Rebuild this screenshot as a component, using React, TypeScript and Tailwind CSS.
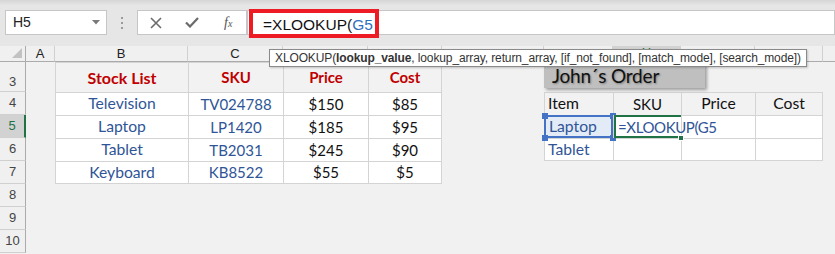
import React from "react";

const LETTERS = ["A", "B", "C", "D", "E", "F", "G", "H", "I", "J", ""];

const cellFont = { fontFamily: "Lato, 'Open Sans', sans-serif" };
const uiFont = { fontFamily: "'Liberation Sans', Arial, sans-serif" };

function RowHeader({ n, active, tall }: { n: number; active?: boolean; tall?: boolean }) {
  return (
    <div
      className={`flex justify-center ${tall ? "items-end pb-[3px] leading-none" : "items-center"} border-b border-b-[#d0d0d0] ${
        active ? "bg-[#d2d2d2] border-r-2 border-r-[#217346] text-[#217346]" : "bg-[#f0f0f0] border-r border-r-[#ababab] text-[#444]"
      } text-[13px]`}
      style={uiFont}
    >
      {n}
    </div>
  );
}

function Empty() {
  return <div />;
}

type CellProps = {
  children?: React.ReactNode;
  className?: string;
};

function TCell({ children, className = "" }: CellProps) {
  return (
    <div className={`flex items-center border-t border-l border-[#d4d4d4] whitespace-nowrap ${className}`} style={cellFont}>
      {children}
    </div>
  );
}

export default function App() {
  const stock = [
    ["Television", "TV024788", "$150", "$85"],
    ["Laptop", "LP1420", "$185", "$95"],
    ["Tablet", "TB2031", "$245", "$90"],
    ["Keyboard", "KB8522", "$55", "$5"],
  ];

  const rows: React.ReactNode[] = [];

  rows.push(
    <React.Fragment key="r3">
      <RowHeader n={3} tall />
      <Empty />
      <TCell className="justify-center font-bold text-[16px] text-[#c00000] bg-[#f2f2f2]">Stock List</TCell>
      <TCell className="justify-center font-bold text-[15px] text-[#c00000] bg-[#f2f2f2]">SKU</TCell>
      <TCell className="justify-center font-bold text-[15px] text-[#c00000] bg-[#f2f2f2]">Price</TCell>
      <TCell className="justify-center font-bold text-[15px] text-[#c00000] bg-[#f2f2f2] border-r">Cost</TCell>
      <Empty />
      <Empty />
      <Empty />
      <Empty />
      <Empty />
      <Empty />
    </React.Fragment>
  );

  stock.forEach((r, ri) => {
    const n = 4 + ri;
    const last = ri === 3 ? "border-b" : "";
    rows.push(
      <React.Fragment key={"r" + n}>
        <RowHeader n={n} active={n === 5} />
        <Empty />
        <TCell className={`justify-center bg-white text-[15.7px] text-[#2f5597] ${last}`}>{r[0]}</TCell>
        <TCell className={`justify-center bg-white text-[15px] text-[#2f5597] ${last}`}>{r[1]}</TCell>
        <TCell className={`justify-center bg-white text-[15px] text-[#111] ${last}`}>{r[2]}</TCell>
        <TCell className={`justify-center bg-white text-[15px] text-[#111] border-r ${last}`}>{r[3]}</TCell>
        <Empty />
        {n === 4 && (
          <>
            <TCell className="justify-start pl-[3px] bg-[#f2f2f2] text-[15.7px] text-[#111]">Item</TCell>
            <TCell className="justify-center bg-[#f2f2f2] text-[15px] text-[#111]">SKU</TCell>
            <TCell className="justify-center bg-[#f2f2f2] text-[15.7px] text-[#111]">Price</TCell>
            <TCell className="justify-center bg-[#f2f2f2] text-[15.7px] text-[#111] border-r">Cost</TCell>
          </>
        )}
        {n === 5 && (
          <>
            <div className="relative border-t border-l border-[#d4d4d4] bg-[#e3ebf6]">
              <div className="absolute -top-px -left-px right-0 bottom-0 border-2 border-[#4472c4]" />
              <span className="absolute -top-[3px] -left-[3px] w-[6px] h-[6px] bg-[#4472c4]" />
              <span className="absolute -top-[3px] -right-[3px] w-[6px] h-[6px] bg-[#4472c4]" />
              <span className="absolute -bottom-[3px] -left-[3px] w-[6px] h-[6px] bg-[#4472c4]" />
              <span className="absolute -bottom-[3px] -right-[3px] w-[6px] h-[6px] bg-[#4472c4]" />
              <div className="relative flex items-center h-full pl-[4px] text-[15.7px] text-[#2f5597]" style={cellFont}>
                Laptop
              </div>
            </div>
            <div className="relative border-t border-l border-[#d4d4d4] bg-white z-10">
              <div className="absolute -top-px left-0 right-0 bottom-0 border-t-2 border-b-2 border-l-2 border-[#217346]" />
              <span className="absolute -bottom-[3px] -right-[3px] w-[6px] h-[6px] bg-[#217346] border border-white" />
              <div
                className="relative flex items-center h-full pl-[4px] text-[15px] tracking-[-0.4px] text-[#2f5597] whitespace-nowrap"
                style={cellFont}
              >
                =XLOOKUP(G5
              </div>
            </div>
            <TCell className="bg-white" />
            <TCell className="bg-white border-r" />
          </>
        )}
        {n === 6 && (
          <>
            <TCell className="justify-start pl-[3px] bg-white text-[15.7px] text-[#2f5597] border-b">Tablet</TCell>
            <TCell className="bg-white border-b" />
            <TCell className="bg-white border-b" />
            <TCell className="bg-white border-r border-b" />
          </>
        )}
        {n === 7 && (
          <>
            <Empty />
            <Empty />
            <Empty />
            <Empty />
          </>
        )}
        <Empty />
      </React.Fragment>
    );
  });

  [8, 9, 10].forEach((n) => {
    rows.push(
      <React.Fragment key={"r" + n}>
        <RowHeader n={n} />
        {Array.from({ length: 11 }).map((_, i) => (
          <Empty key={i} />
        ))}
      </React.Fragment>
    );
  });

  return (
    <div className="w-[835px] h-[254px] overflow-hidden bg-[#f1f1f1] relative">
      {/* Toolbar */}
      <div
        className="h-[46px] bg-gradient-to-b from-[#d6d6d6] via-[#e6e6e6] via-[12%] to-[#e6e6e6] flex items-start pt-[10px]"
        style={uiFont}
      >
        <div className="ml-[5px] w-[102px] h-[25px] bg-white border border-[#c6c6c6] flex items-center justify-between pl-[7px] pr-[6px] text-[14px] text-[#222]">
          <span>H5</span>
          <svg width="8" height="5" viewBox="0 0 8 5">
            <path d="M0 0 L8 0 L4 4.5 Z" fill="#7a7a7a" />
          </svg>
        </div>
        <div className="w-[30px] h-[25px] flex flex-col items-center justify-center gap-[3px]">
          <span className="w-[2px] h-[2px] bg-[#9a9a9a]" />
          <span className="w-[2px] h-[2px] bg-[#9a9a9a]" />
          <span className="w-[2px] h-[2px] bg-[#9a9a9a]" />
        </div>
        <div className="w-[110px] h-[25px] bg-white border border-[#c6c6c6] flex items-center">
          <div className="w-[37px] flex justify-center">
            <svg width="12" height="12" viewBox="0 0 12 12">
              <path d="M1 1 L11 11 M11 1 L1 11" stroke="#6b6b6b" strokeWidth="1.6" />
            </svg>
          </div>
          <div className="w-[36px] flex justify-center">
            <svg width="14" height="11" viewBox="0 0 14 11">
              <path d="M1 5.5 L5 9.5 L13 1" stroke="#6b6b6b" strokeWidth="2.2" fill="none" />
            </svg>
          </div>
          <div className="w-[36px] flex justify-center">
            <span className="text-[14px] italic text-[#555]" style={{ fontFamily: "'Liberation Serif', serif" }}>
              f<span className="text-[10px]">x</span>
            </span>
          </div>
        </div>
        <div className="flex-1 h-[25px] bg-white border border-[#c6c6c6] relative">
          <div className="absolute -top-[2px] left-[1px] w-[130px] h-[29px] border-[4px] border-[#ed1c24]" />
          <div className="absolute left-[15px] top-[2px] text-[15.5px] text-[#111]">
            =XLOOKUP(<span className="text-[#2f6fc0]">G5</span>
          </div>
        </div>
      </div>

      {/* Sheet */}
      <div className="grid grid-cols-[26px_29px_133px_95px_85px_74px_102px_69px_68px_74px_68px_200px] grid-rows-[16px_30px_23px_23px_23px_23px_23px_23px_23px]">
        <div className="relative bg-[#f0f0f0] border-r border-r-[#ababab] border-b border-b-[#ababab]">
          <svg className="absolute right-[3px] bottom-[3px]" width="10" height="10" viewBox="0 0 10 10">
            <path d="M10 0 L10 10 L0 10 Z" fill="#c2c2c2" />
          </svg>
        </div>
        {LETTERS.map((l, i) => (
          <div
            key={i}
            className={`flex items-center justify-center text-[13px] border-r border-r-[#d0d0d0] ${
              l === "H"
                ? "bg-[#d2d2d2] text-[#217346] border-b-2 border-b-[#217346]"
                : "bg-[#f0f0f0] text-[#222] border-b border-b-[#ababab]"
            }`}
            style={uiFont}
          >
            {l}
          </div>
        ))}
        {rows}
      </div>

      {/* John's Order shape */}
      <div
        className="absolute left-[544px] top-[62px] w-[161px] h-[26px] bg-[#bfbfbf] shadow-[2px_2px_3px_rgba(0,0,0,0.35)] flex items-center pl-[8px] text-[19px] tracking-[-0.2px] text-[#111] leading-none"
        style={{ fontFamily: "Lato, 'Open Sans', sans-serif", textShadow: "1px 1px 2px rgba(0,0,0,0.35)" }}
      >
        John´s Order
      </div>

      {/* Tooltip */}
      <div
        className="absolute left-[269px] top-[49px] w-[538px] h-[18px] bg-white border border-[#8a8a8a] shadow-[1px_1px_2px_rgba(0,0,0,0.2)] flex items-center pl-[5px] text-[12px] tracking-[-0.12px] text-[#333] whitespace-nowrap"
        style={uiFont}
      >
        XLOOKUP(<b className="font-bold">lookup_value</b>, lookup_array, return_array, [if_not_found], [match_mode], [search_mode])
      </div>
    </div>
  );
}
